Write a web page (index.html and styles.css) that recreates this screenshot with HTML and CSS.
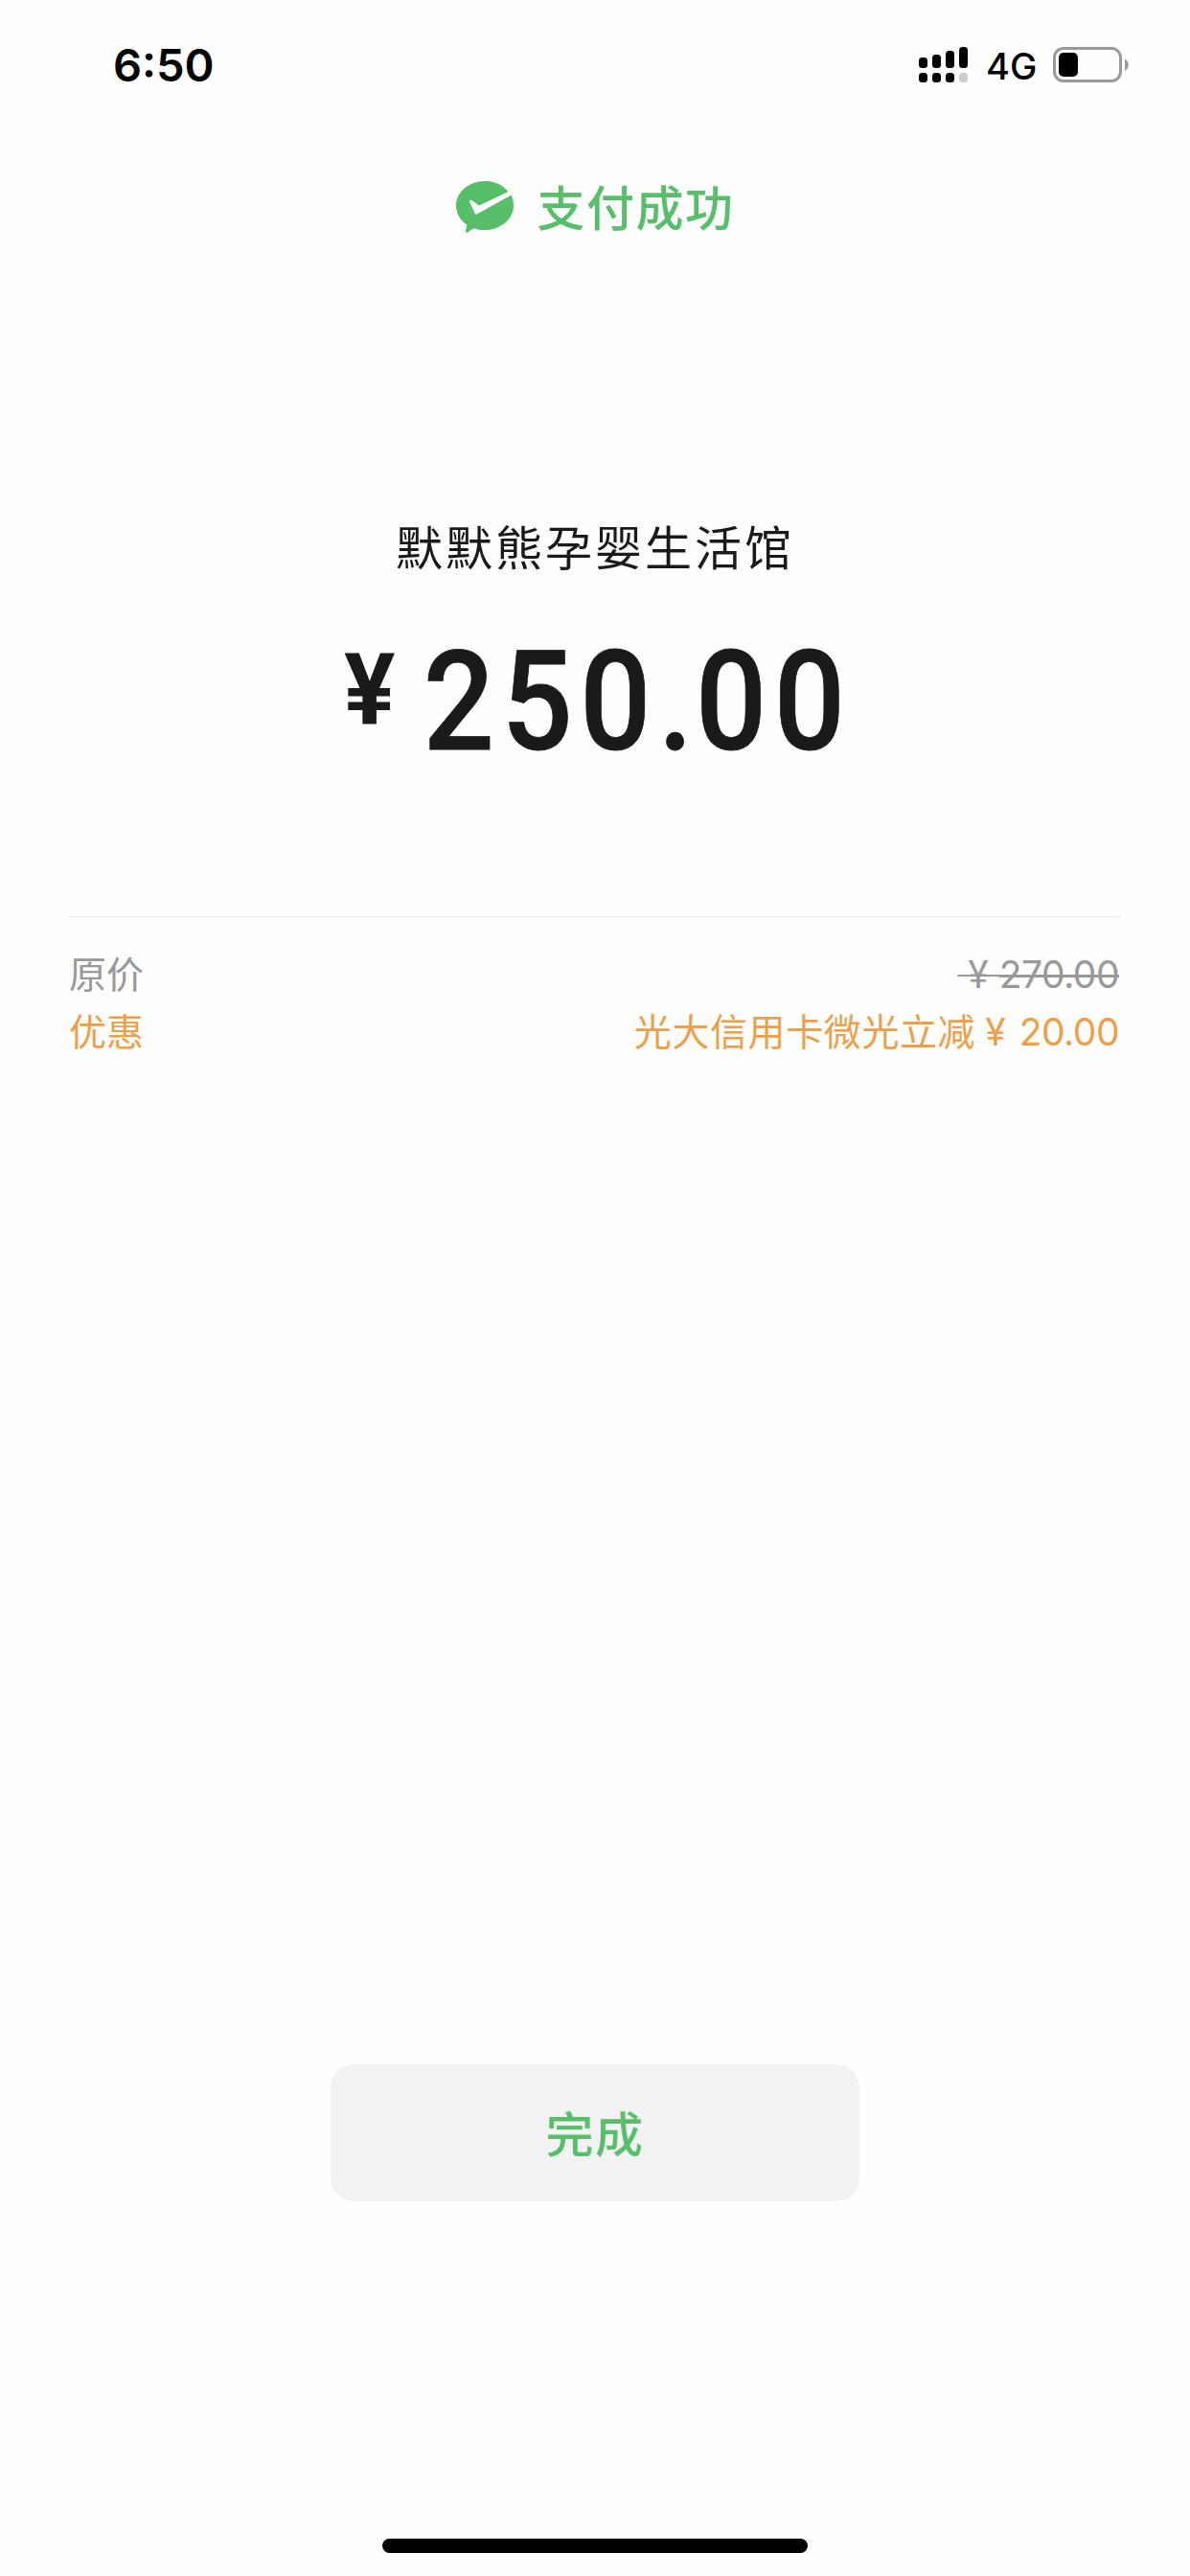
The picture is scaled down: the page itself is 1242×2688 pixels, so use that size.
FILE: index.html
```html
<!DOCTYPE html>
<html lang="zh-CN">
<head>
    <meta charset="UTF-8">
    <meta name="viewport" content="width=device-width, initial-scale=1.0">
    <title>支付成功</title>
    <link rel="stylesheet" href="styles.css">
</head>
<body>
    <div class="screen">
        <div class="status-bar">
            <span class="time">6:50</span>
            <div class="status-right">
                <svg class="signal" width="51" height="38" viewBox="0 0 51 38">
                    <rect x="0" y="11" width="9" height="11" rx="3.5"/>
                    <rect x="14" y="8" width="9" height="14" rx="3.5"/>
                    <rect x="28" y="4" width="9" height="18" rx="3.5"/>
                    <rect x="42" y="0" width="9" height="22" rx="3.5"/>
                    <rect x="0" y="27" width="9" height="10" rx="3.5"/>
                    <rect x="14" y="27" width="9" height="10" rx="3.5"/>
                    <rect x="28" y="27" width="9" height="10" rx="3.5"/>
                    <rect x="42" y="27" width="9" height="10" rx="3.5" fill="#cccccc"/>
                </svg>
                <span class="network">4G</span>
                <svg class="battery" width="80" height="38" viewBox="0 0 80 38">
                    <rect x="1.5" y="1.5" width="69" height="34" rx="9.5" fill="none" stroke="#999999" stroke-width="3"/>
                    <rect x="6" y="6" width="20" height="25" rx="5"/>
                    <path d="M75 12.5C80 15 80 22 75 25Z" fill="#999999"/>
                </svg>
            </div>
        </div>

        <div class="result">
            <svg class="pay-icon" width="60" height="54" viewBox="0 0 60 54">
                <path d="M30 0C40 0 49 4.300 54.500 11L24 25.500L17 20.500Q14.500 19 14 21L19.500 33.500Q20.500 35.500 22.500 34L57.700 14.500C59.200 18 60 21.500 60 25.500C60 39.500 46.600 51 30 51C26 51 22 50.500 18.500 49.200L12 53.500Q9.800 54.500 10 52.500L11.200 45.500C4.500 41 0 34 0 25.500C0 11.500 13.400 0 30 0Z"/>
            </svg>
            <span class="result-text">支付成功</span>
        </div>

        <div class="merchant">默默熊孕婴生活馆</div>
        <div class="amount">
            <span class="currency">¥</span>
            <span class="number">250<span class="dot">.</span>00</span>
        </div>

        <div class="details">
            <div class="detail-row original">
                <span class="label">原价</span>
                <span class="value"><s class="strike-sign">&nbsp;¥&nbsp;</s><s class="strike-price">270.00</s></span>
            </div>
            <div class="detail-row discount">
                <span class="label">优惠</span>
                <span class="value"><span class="offer">光大信用卡微光立减</span><span class="sign">¥</span><span class="price">20.00</span></span>
            </div>
        </div>

        <button class="done-btn">完成</button>
        <div class="home-indicator"></div>
    </div>
</body>
</html>
```
FILE: styles.css
```css
* {
    box-sizing: border-box;
}
body {
    margin: 0;
    background-color: #fefefe;
    color: #1a1a1a;
    font-family: Inter, 'Noto Sans CJK SC', sans-serif;
}
.screen {
    width: 1242px;
    height: 2688px;
    display: flex;
    flex-direction: column;
    align-items: center;
}
.status-bar {
    width: 100%;
    height: 136px;
    padding: 0 63px 0 118px;
    display: flex;
    justify-content: space-between;
    align-items: center;
    color: #000;
    line-height: 136px;
}
.time {
    font-size: 47px;
    font-weight: 600;
}
.status-right {
    display: flex;
    align-items: center;
}
.network {
    width: 51px;
    margin: 0 19px;
    padding-top: 2px;
    font-size: 38px;
    font-weight: 500;
}
.result {
    height: 160px;
    display: flex;
    align-items: center;
    justify-content: center;
    gap: 25px;
    color: #57be6a;
}
.pay-icon {
    fill: #57be6a;
}
.result-text {
    padding-top: 3px;
    font-size: 50px;
    font-weight: 500;
    line-height: 60px;
    letter-spacing: 1.5px;
}
.merchant {
    margin-top: 237px;
    font-size: 49px;
    line-height: 80px;
    letter-spacing: 3px;
}
.amount {
    width: 524px;
    height: 160px;
    margin-top: 39px;
    display: flex;
    justify-content: space-between;
    font-family: Roboto, sans-serif;
}
.currency {
    font-size: 103px;
    font-weight: 700;
    line-height: 136px;
    transform: scaleX(0.97);
    transform-origin: left;
}
.number {
    margin-left: -60px;
    margin-right: -6px;
    font-size: 145px;
    font-weight: 500;
    line-height: 160px;
    letter-spacing: 8.4px;
    transform: scaleX(0.9);
    transform-origin: right;
    -webkit-text-stroke: 0.8px #1a1a1a;
}
.dot {
    letter-spacing: 3px;
}
.details {
    width: 1098px;
    margin-top: 144px;
    padding-top: 30px;
    border-top: 1px solid #e3e3e3;
}
.detail-row {
    height: 60px;
    display: flex;
    justify-content: space-between;
    font-size: 39px;
    line-height: 60px;
}
.value {
    display: flex;
    margin-right: 2px;
}
.original {
    color: #999999;
}
.discount {
    color: #eda04b;
}
.offer {
    letter-spacing: 0.6px;
}
.sign {
    margin: 0 14px 0 10px;
}
.strike-sign {
    text-decoration-thickness: 2px;
}
.strike-price,
.price {
    letter-spacing: -0.5px;
}
.strike-price {
    text-decoration-thickness: 3px;
}
.done-btn {
    width: 552px;
    height: 143px;
    margin-top: 1047px;
    padding: 0 0 4px;
    border: none;
    border-radius: 25px;
    background-color: #f2f2f2;
    color: #57be6a;
    font-family: 'Noto Sans CJK SC', sans-serif;
    font-size: 50px;
    font-weight: 500;
    letter-spacing: 1.5px;
}
.home-indicator {
    width: 444px;
    height: 15px;
    margin-top: 352px;
    border-radius: 8px;
    background-color: #000;
}
```
